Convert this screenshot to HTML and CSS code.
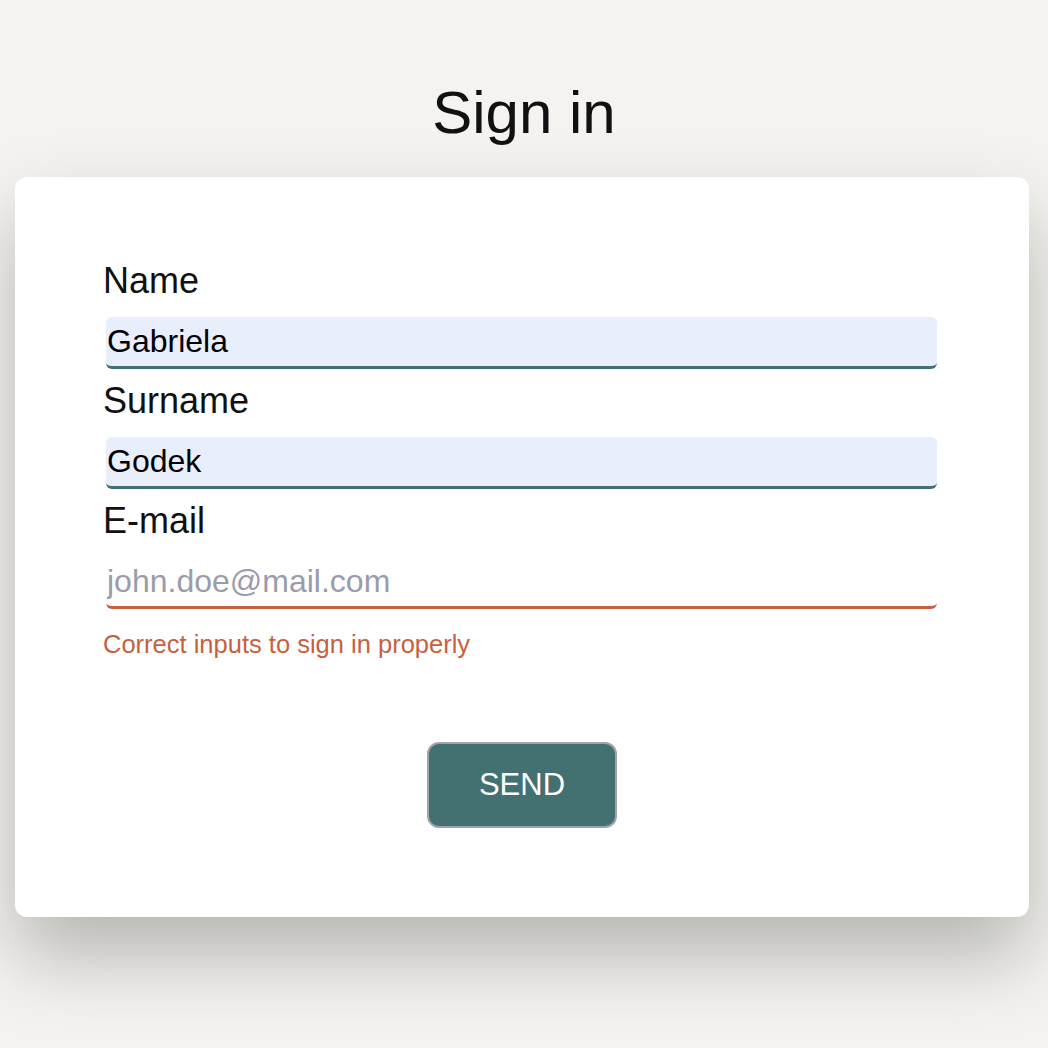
FILE: index.html
```html
<!DOCTYPE html>
<html lang="en">
<head>
<meta charset="utf-8">
<title>Sign in</title>
<link rel="stylesheet" href="styles.css">
</head>
<body>
<h1 class="title">Sign in</h1>
<form class="card">
  <label class="label" for="name">Name</label>
  <input class="input filled" id="name" type="text" value="Gabriela">
  <label class="label" for="surname">Surname</label>
  <input class="input filled" id="surname" type="text" value="Godek">
  <label class="label" for="email">E-mail</label>
  <input class="input invalid" id="email" type="email" placeholder="john.doe@mail.com">
  <p class="error">Correct inputs to sign in properly</p>
  <div class="actions">
    <button class="send" type="button">SEND</button>
  </div>
</form>
</body>
</html>
```
FILE: styles.css
```css
* { box-sizing: border-box; }
html, body {
  margin: 0;
  padding: 0;
}
body {
  background: #f4f3ef;
  font-family: "Liberation Sans", Arial, Helvetica, sans-serif;
  color: #111111;
  height: 1048px;
  overflow: hidden;
}
.title {
  margin: 0;
  padding-top: 79px;
  height: 177px;
  font-size: 60px;
  line-height: 68px;
  font-weight: 400;
  text-align: center;
  color: #111111;
}
.card {
  margin: 0 19px 0 15px;
  background: #ffffff;
  border-radius: 12px;
  padding: 84px 88px 89px 88px;
  box-shadow: 0 40px 80px rgba(0, 0, 0, 0.26);
  display: flex;
  flex-direction: column;
  width: 1014px;
}
.label {
  display: block;
  font-size: 36px;
  line-height: 40px;
  color: #111111;
}
.input {
  display: block;
  margin: 16px 4px 12px 3px;
  width: calc(100% - 7px);
  height: 52px;
  padding: 0 1px;
  border: none;
  border-bottom: 3px solid #437070;
  border-radius: 6px;
  font-family: inherit;
  font-size: 32px;
  color: #000000;
  background: #ffffff;
  outline: none;
}
.input.filled {
  background: #e8eefb;
}
.input.invalid {
  border-bottom-color: #c8603f;
}
.input::placeholder {
  color: #9a9cab;
}
.error {
  margin: 9px 0 0 0;
  font-size: 25.5px;
  line-height: 28px;
  color: #c8603f;
}
.actions {
  display: flex;
  justify-content: center;
  margin-top: 84px;
}
.send {
  width: 190px;
  height: 86px;
  background: #437070;
  color: #ffffff;
  border: 2px solid #a2a3a9;
  border-radius: 12px;
  font-family: inherit;
  font-size: 31px;
  padding: 0;
}
```
